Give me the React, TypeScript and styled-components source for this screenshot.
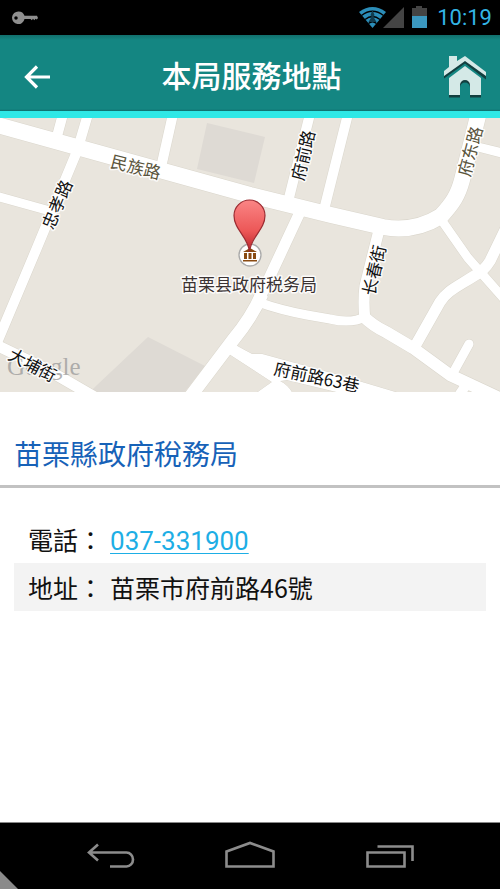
import React from "react";
import styled, { createGlobalStyle } from "styled-components";

const GlobalStyle = createGlobalStyle`
  * { box-sizing: border-box; }
  body {
    margin: 0;
    background: #fff;
    color: #111;
    font-family: Roboto, "Noto Sans CJK TC", sans-serif;
  }
  button { padding: 0; border: 0; background: none; cursor: pointer; }
  svg { display: block; }
`;

const Screen = styled.div`
  display: flex;
  flex-direction: column;
  min-height: 100vh;
`;

const StatusBar = styled.div`
  display: flex;
  align-items: center;
  height: 35px;
  padding: 0 8px 0 12px;
  background: #000;
`;

const StatusIcons = styled.div`
  display: flex;
  align-items: center;
  margin-left: auto;
`;

const Clock = styled.time`
  margin-left: 9px;
  color: #33b5e5;
  font: 400 22px/35px Roboto, sans-serif;
`;

const Header = styled.header`
  display: flex;
  align-items: center;
  justify-content: space-between;
  height: 83px;
  padding: 8px 13px 0 16px;
  border-bottom: 7px solid #2ee8e6;
  background: linear-gradient(#12706d 0, #148682 5px, #148682 74px, #0e6f6d 76px);
`;

const HeaderButton = styled.button`
  display: flex;
  align-items: center;
  justify-content: center;
  width: 44px;
  height: 44px;
`;

const Title = styled.h1`
  margin: 0;
  padding-bottom: 6px;
  color: #fff;
  font: 500 30px/44px "Noto Sans CJK TC", sans-serif;
`;

const MapArea = styled.div`
  height: 274px;
  background: #e9e5dd;
  overflow: hidden;

  svg { width: 100%; height: 100%; }
`;

const Road = styled.path<{ $width: number; $round?: boolean }>`
  fill: none;
  stroke: #fff;
  stroke-width: ${(p) => p.$width}px;
  stroke-linejoin: round;
  stroke-linecap: ${(p) => (p.$round ? "round" : "butt")};
`;

const RoadEdge = styled(Road)`
  stroke: #dad6cc;
  stroke-width: ${(p) => p.$width + 1}px;
`;

const MapLabel = styled.text<{ $tone?: string }>`
  fill: ${(p) => p.$tone ?? "#111"};
  stroke: #fff;
  stroke-opacity: 0.85;
  stroke-width: 3px;
  stroke-linejoin: round;
  paint-order: stroke;
  font: 400 17px "Noto Sans CJK SC", sans-serif;
  text-anchor: middle;
  dominant-baseline: central;
`;

const Watermark = styled.text`
  fill: #999;
  fill-opacity: 0.75;
  font: 400 25px "Liberation Serif", serif;
`;

const Office = styled.h2`
  margin: 0;
  padding: 40px 14px 11px;
  border-bottom: 3px solid #c2c2c2;
  color: #1762b8;
  font: 400 28px/42px "Noto Sans CJK TC", sans-serif;
`;

const Details = styled.dl`
  margin: 0;
  padding: 27px 14px;
`;

const DetailRow = styled.div<{ $shaded?: boolean }>`
  display: flex;
  gap: 7px;
  height: 48px;
  padding: 0 14px;
  background: ${(p) => (p.$shaded ? "#f3f3f3" : "transparent")};
  font: 400 25px/48px "Noto Sans CJK TC", sans-serif;

  dt, dd { margin: 0; }
`;

const PhoneLink = styled.a`
  color: #1daee5;
  font-family: Roboto, sans-serif;
  font-size: 26px;
  line-height: 44px;
  text-decoration: underline;
  text-decoration-thickness: 1px;
  text-underline-offset: 3px;
`;

const NavBar = styled.nav`
  position: relative;
  display: flex;
  justify-content: center;
  height: 67px;
  margin-top: auto;
  border-top: 1px solid #888;
  background: #000;
`;

const NavButton = styled.button`
  display: flex;
  align-items: center;
  justify-content: center;
  width: 140px;
  height: 66px;
`;

const Corner = styled.div`
  position: absolute;
  left: 0;
  bottom: 0;
  width: 18px;
  height: 18px;
  background: #8a8a8a;
  clip-path: polygon(0 0, 100% 100%, 0 100%);
`;

type RoadShape = { d: string; width: number; round?: boolean };

const roads: RoadShape[] = [
  { d: "M-10 5L250 77L331 97L383 109C405 113 425 108 441 98C453 85 458 77 462 62L479 -6", width: 16 },
  { d: "M80 26L36 132L-4 227", width: 10 },
  { d: "M-4 78L50 93", width: 9 },
  { d: "M63 -4L56 22", width: 10 },
  { d: "M88 -4L78 30", width: 10 },
  { d: "M173 -4L160 54", width: 10 },
  { d: "M310 -4L287 88", width: 10 },
  { d: "M348 -4L323 96", width: 10 },
  { d: "M300 94L258 184", width: 11 },
  { d: "M262 176Q252 199 233 222L190 279", width: 13 },
  { d: "M379 112L365 168Q363 184 365 202", width: 11 },
  { d: "M258 184Q280 192 307 197L330 201Q351 206 365 199", width: 9 },
  { d: "M362 197Q373 208 386 214L413 230L450 257L508 284", width: 12 },
  { d: "M474 28L506 36", width: 9 },
  { d: "M440 100L468 140L506 183", width: 9 },
  { d: "M506 110L490 143Q484 153 474 158C455 170 447 173 440 184L414 230", width: 11 },
  { d: "M469 226L453 255", width: 9, round: true },
  { d: "M468 264L456 282", width: 10 },
  { d: "M-6 226L48 252L98 281", width: 11 },
];

const lanePatch = "M234 226L239 229L252 236H262L273 239L335 256L402 276H345L287 262L280 263Q288 267 293 276H255L272 264L229 236Z";

const labels = [
  { text: "民族路", x: 136, y: 48, angle: 14, tone: "#5a543c" },
  { text: "忠孝路", x: 56, y: 86, angle: -67 },
  { text: "府前路", x: 302, y: 37, angle: -77 },
  { text: "府东路", x: 469, y: 33, angle: -75, tone: "#5a543c" },
  { text: "长春街", x: 373, y: 152, angle: -77 },
  { text: "大埔街", x: 33, y: 246, angle: 28 },
  { text: "府前路63巷", x: 317, y: 258, angle: 12 },
  { text: "苗栗县政府税务局", x: 249, y: 165, angle: 0, tone: "#3b3333" },
];

const LocationMap = () => (
  <MapArea>
    <svg viewBox="0 0 500 274" preserveAspectRatio="xMidYMid slice" role="img" aria-label="苗栗县政府税务局">
      <defs>
        <linearGradient id="pin" x1="0" y1="0" x2="0" y2="1">
          <stop offset="0" stopColor="#fa8585" />
          <stop offset="0.6" stopColor="#ec5757" />
          <stop offset="1" stopColor="#b82329" />
        </linearGradient>
      </defs>
      <path d="M207 5L265 19L254 65L197 51Z" fill="#dedad4" />
      <path d="M148 219L205 248L183 276H88L96 268Z" fill="#dedad4" />
      <path d={lanePatch} fill="#fff" stroke="#dad6cc" />
      {roads.map((r) => <RoadEdge key={r.d} d={r.d} $width={r.width} $round={r.round} />)}
      {roads.map((r) => <Road key={r.d} d={r.d} $width={r.width} $round={r.round} />)}
      <path d={lanePatch} fill="#fff" />
      <Watermark x="7" y="257">Google</Watermark>
      {labels.map((l) => (
        <MapLabel key={l.text} $tone={l.tone} transform={`translate(${l.x} ${l.y}) rotate(${l.angle})`}>
          {l.text}
        </MapLabel>
      ))}
      <circle cx="250" cy="137" r="11" fill="#fff" stroke="#aaa" strokeWidth="1.3" />
      <path d="M243 134L250 130L257 134ZM244 135h3v6h-3zM248.500 135h3v6h-3zM253 135h3v6h-3zM243 142h14v1.600h-14z" fill="#8a4b12" />
      <path d="M249.500 134C248.500 119 234 112 234 97.500A15.500 15.500 0 0 1 265 97.500C265 112 250.500 119 249.500 134Z" fill="url(#pin)" stroke="#9b2b31" strokeWidth="1.2" />
    </svg>
  </MapArea>
);

const KeyIcon = () => (
  <svg width="26" height="14" viewBox="0 0 26 14" fill="#8f8f8f">
    <path fillRule="evenodd" d="M6.500 0.500a6.300 6.300 0 0 1 6 4.300H25L26 7l-1.200 1.500-1.300-.8-1.200 1.500-1.300-1.500-1.200 1.500-1.300-1.200h-6A6.300 6.300 0 1 1 6.500.5ZM4 5.200a1.700 1.700 0 1 0 0 3.500 1.700 1.700 0 0 0 0-3.500Z" />
  </svg>
);

const SignalIcons = () => (
  <svg width="70" height="24" viewBox="0 0 70 24">
    <path d="M1 6Q14.500-4 28 6L14.500 22Z" fill="#2b8db8" />
    <path d="M3.500 9.500Q14.500 1 25.500 9.500M7 13.500Q14.500 7.500 22 13.500M10.500 17.500Q14.500 14 18.500 17.500" fill="none" stroke="#000" strokeWidth="1.3" />
    <path d="M14.500 4l2 5-1 2 3 5h-8l3-5-1-2Z" fill="#123c4e" />
    <path d="M46 1V22H25Z" fill="#444" />
    <path d="M54 2h4V0h6v2h5v9H54Z" fill="#444" />
    <path d="M54 10h15v12H54Z" fill="#3b98c0" />
  </svg>
);

const BackArrow = () => (
  <svg width="28" height="24" viewBox="0 0 28 24" fill="none" stroke="#fff" strokeWidth="3.2">
    <path d="M26 12H2.500M13 1.500L2.500 12L13 22.500" />
  </svg>
);

const HouseIcon = () => (
  <svg width="44" height="44" viewBox="0 0 44 44">
    <g fill="#123f3f" transform="translate(0 1.500)">
      <path d="M1 17L6 13V2h8v5l8-5L43 18v5L22 7 1 22Z" />
      <path d="M6 24L22 12 38 24V41H27V31a5 5 0 0 0-10 0V41H6Z" />
    </g>
    <g fill="#d4e9e7">
      <path d="M1 16L6 12V1h8v5l8-5L43 17v4L22 6 1 21Z" />
      <path d="M6 23L22 11 38 23V40H27V30a5 5 0 0 0-10 0V40H6Z" />
    </g>
  </svg>
);

const NavIcon = ({ d }: { d: string }) => (
  <svg width="50" height="30" viewBox="0 0 50 30" fill="none" stroke="#8c8c8c" strokeWidth="2.600">
    <path d={d} />
  </svg>
);

export default function App() {
  return (
    <>
      <GlobalStyle />
      <Screen>
        <StatusBar>
          <KeyIcon />
          <StatusIcons>
            <SignalIcons />
            <Clock>10:19</Clock>
          </StatusIcons>
        </StatusBar>
        <Header>
          <HeaderButton aria-label="返回"><BackArrow /></HeaderButton>
          <Title>本局服務地點</Title>
          <HeaderButton aria-label="首頁"><HouseIcon /></HeaderButton>
        </Header>
        <main>
          <LocationMap />
          <Office>苗栗縣政府稅務局</Office>
          <Details>
            <DetailRow>
              <dt>電話：</dt>
              <dd><PhoneLink href="tel:037331900">037-331900</PhoneLink></dd>
            </DetailRow>
            <DetailRow $shaded>
              <dt>地址：</dt>
              <dd>苗栗市府前路46號</dd>
            </DetailRow>
          </Details>
        </main>
        <NavBar>
          <NavButton aria-label="返回"><NavIcon d="M4.500 11.500H41.500a6.500 7 0 0 1 0 14H25M13 3.500L4 11.500L13 19.500" /></NavButton>
          <NavButton aria-label="主畫面"><NavIcon d="M1.500 10.500L25 2L48.500 10.500V25.500H1.500Z" /></NavButton>
          <NavButton aria-label="最近使用"><NavIcon d="M2.500 11.500H39.500V25.500H2.500ZM12.500 5.500H47.500V20" /></NavButton>
          <Corner />
        </NavBar>
      </Screen>
    </>
  );
}
